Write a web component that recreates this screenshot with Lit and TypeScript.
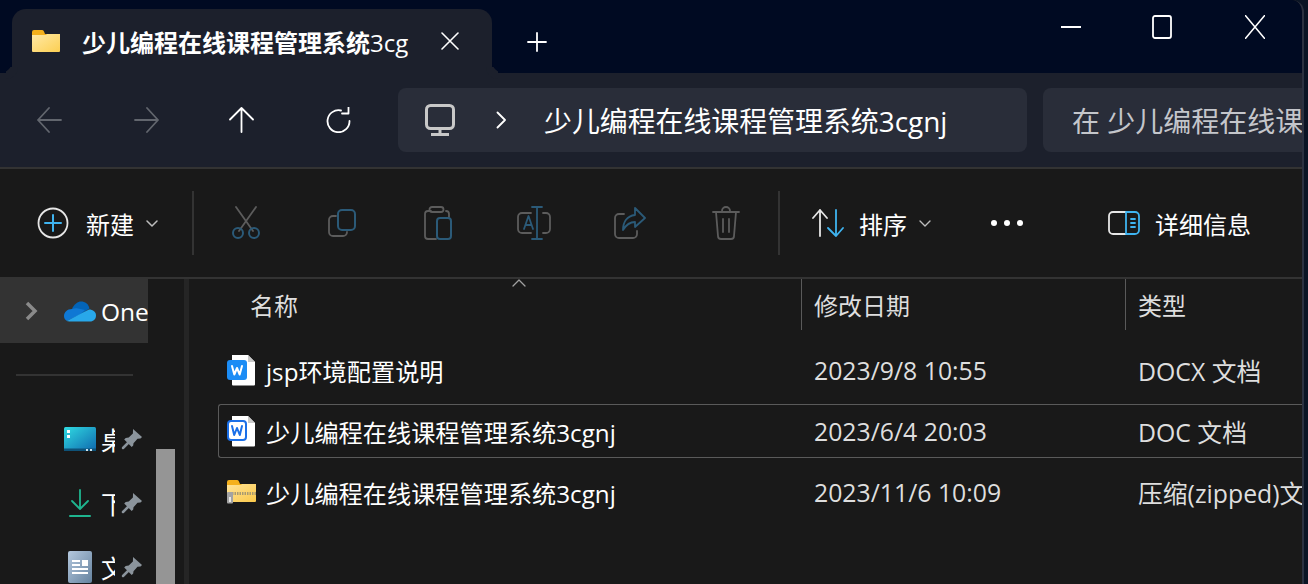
import { LitElement, html, css, svg } from "lit";
import { customElement } from "lit/decorators.js";

const BLUE = "#3fb4f0";
const DIM_BLUE = "#2b5a78";
const DIM = "#5c5c5c";

const icon = (w: number, h: number, body: unknown, cls = "") =>
  html`<svg class=${cls} width=${w} height=${h} viewBox="0 0 ${w} ${h}" fill="none" stroke-linecap="round" stroke-linejoin="round">${body}</svg>`;

const folderIcon = icon(28, 22, svg`
  <defs><linearGradient id="fold" x1="0" y1="0" x2="1" y2="1"><stop offset="0" stop-color="#ffe9a6"/><stop offset="1" stop-color="#fccf52"/></linearGradient></defs>
  <path d="M0 2a2 2 0 0 1 2-2h8a2 2 0 0 1 2 1.500l1 2.500h15v4H0z" fill="#f4b01c"/>
  <path d="M0 5h14l1-1h13v17a1 1 0 0 1-1 1H1a1 1 0 0 1-1-1z" fill="url(#fold)"/>
`);

const wordIcon = (outlined: boolean) => icon(29, 32, svg`
  <path d="M5 1h16l7 7v22.500a1 1 0 0 1-1 1H6a1 1 0 0 1-1-1z" fill="#fff"/>
  <path d="M21 1v7h7" fill="#c9c9c9"/>
  ${outlined
    ? svg`<rect x="1" y="6" width="18" height="19" rx="3" fill="#fff" stroke="#1a6fe8" stroke-width="2"/><path d="M5 11l2.200 9 2.800-7 2.800 7 2.200-9" stroke="#1a6fe8" stroke-width="2"/>`
    : svg`<rect x="0" y="6" width="20" height="20" rx="3" fill="#1b8cf5"/><path d="M5 12l2.300 8.500 2.700-6.500 2.700 6.500 2.300-8.500" stroke="#fff" stroke-width="2"/>`}
`);

const zipIcon = icon(29, 24, svg`
  <defs><linearGradient id="zipf" x1="0" y1="0" x2="1" y2="1"><stop offset="0" stop-color="#ffe398"/><stop offset="1" stop-color="#fbc94a"/></linearGradient></defs>
  <path d="M0 2a2 2 0 0 1 2-2h8a2 2 0 0 1 2 1.500l1 2.500h16v4H0z" fill="#f4b01c"/>
  <path d="M0 5h14l1-1h14v17a1 1 0 0 1-1 1H1a1 1 0 0 1-1-1z" fill="url(#zipf)"/>
  <path d="M5 13.500h24" stroke="#a89a72" stroke-width="3" stroke-dasharray="1.500 1" stroke-linecap="butt"/>
  <rect x="0" y="12" width="6" height="11.500" rx="1" fill="#a3a3a3"/>
  <rect x="2" y="17" width="2" height="5" fill="#e8e8e8"/>
`);

const pinIcon = icon(22, 22, svg`
  <path d="M12 1l9 8-1.500 1.500-3 .3-4 4.500-.3 2.200-1.500 1.500-7.500-7.500 1.500-1.500 3-.4 4.200-4 .1-3z" fill="#8b949c"/>
  <path d="M7 15l-5 5" stroke="#8b949c" stroke-width="2.500"/>
`);

const columns = ["名称", "修改日期", "类型"];
const files = [
  { name: "jsp环境配置说明", date: "2023/9/8 10:55", kind: "DOCX 文档", icon: wordIcon(false), selected: false },
  { name: "少儿编程在线课程管理系统3cgnj", date: "2023/6/4 20:03", kind: "DOC 文档", icon: wordIcon(true), selected: true },
  { name: "少儿编程在线课程管理系统3cgnj", date: "2023/11/6 10:09", kind: "压缩(zipped)文件夹", icon: zipIcon, selected: false },
];

@customElement("app-root")
export class AppRoot extends LitElement {
  static override styles = css`
    :host {
      display: block;
      width: 1308px;
      height: 584px;
      overflow: hidden;
      background: #0a1424;
      color: #fff;
      font-family: "Open Sans", "Noto Sans CJK SC", sans-serif;
    }
    svg { display: block; flex: none; }

    .window {
      width: 1304px;
      height: 584px;
      box-sizing: border-box;
      border-right: 2px solid #2b3140;
      border-top-right-radius: 12px;
      overflow: hidden;
      background: #191919;
    }

    .titlebar {
      height: 73px;
      background: #000a22;
      display: flex;
      align-items: flex-end;
      padding-left: 12px;
    }
    .tab {
      position: relative;
      width: 480px;
      height: 64px;
      flex: none;
      box-sizing: border-box;
      background: #1c202c;
      border-radius: 14px 14px 0 0;
      display: flex;
      align-items: center;
      padding-left: 20px;
      font-size: 24px;
      font-weight: 700;
      white-space: nowrap;
    }
    .tab::before,
    .tab::after {
      content: "";
      position: absolute;
      bottom: 0;
      width: 12px;
      height: 12px;
      background: #000a22;
    }
    .tab::before { left: -12px; border-bottom-right-radius: 12px; box-shadow: 6px 6px 0 0 #1c202c; }
    .tab::after { right: -12px; border-bottom-left-radius: 12px; box-shadow: -6px 6px 0 0 #1c202c; }
    .tab-name { width: 326px; margin-left: 22px; flex: none; }
    .tab-latin { font-weight: 400; }
    .tab-x { margin-left: 33px; }
    .new-tab { margin-left: 35px; align-self: center; margin-top: 10px; }
    .winctl {
      margin-left: auto;
      align-self: flex-start;
      height: 54px;
      display: flex;
      align-items: center;
      padding-right: 37px;
    }
    .min-btn { margin-right: 71px; }
    .max-btn { margin-right: 73px; }

    .navbar {
      height: 94px;
      background: #1c202c;
      display: flex;
      align-items: center;
      box-sizing: border-box;
    }
    .nav-btns { width: 398px; display: flex; padding-left: 37px; gap: 72px; box-sizing: border-box; flex: none; }
    .nav-up { margin-left: -2px; }
    .address {
      width: 629px;
      height: 64px;
      flex: none;
      background: #292d39;
      border-radius: 8px;
      display: flex;
      align-items: center;
      padding-left: 27px;
      box-sizing: border-box;
      font-size: 27.900px;
      white-space: nowrap;
    }
    .crumb-sep { margin: 0 38px 0 41px; }
    .search {
      margin-left: 16px;
      flex: 1;
      min-width: 0;
      height: 64px;
      background: #292d39;
      border-radius: 8px 0 0 8px;
      padding-left: 29px;
      display: flex;
      align-items: center;
      font-size: 28px;
      color: #c4c6cb;
      white-space: nowrap;
      overflow: hidden;
    }

    .toolbar {
      height: 112px;
      box-sizing: border-box;
      border-top: 2px solid #333;
      border-bottom: 2px solid #333;
      display: flex;
      align-items: center;
      background: #191919;
      font-size: 24px;
      white-space: nowrap;
    }
    .tb-new { display: flex; align-items: center; padding-left: 37px; width: 192px; box-sizing: border-box; flex: none; }
    .tb-sep { width: 2px; height: 64px; background: #333; flex: none; }
    .tb-group { display: flex; padding-left: 4px; width: 584px; box-sizing: border-box; flex: none; align-items: center; }
    .tb-cell { width: 96px; flex: none; display: flex; justify-content: center; }
    .tb-sort { display: flex; align-items: center; padding-left: 32px; width: 210px; box-sizing: border-box; flex: none; }
    .tb-more { flex: none; width: 118px; }
    .tb-details { display: flex; align-items: center; gap: 15px; }
    .lbl-new { margin-left: 17px; }
    .lbl-sort { margin-left: 15px; }
    .chev-new { margin-left: 12px; }
    .chev-sort { margin-left: 12px; }

    .main { display: flex; height: 305px; }
    .side { width: 184px; flex: none; display: flex; position: relative; border-right: 5px solid #252525; }
    .side-list { width: 148px; flex: none; overflow: hidden; font-size: 24.500px; }
    .side-head {
      height: 64px;
      background: #333;
      display: flex;
      align-items: center;
      padding-left: 25px;
      box-sizing: border-box;
      white-space: nowrap;
    }
    .side-head .cloud { margin-left: 26px; margin-right: 5px; }
    .side-rule { height: 2px; width: 117px; background: #333; margin: 31px 0 0 16px; }
    .side-items { margin-top: 31px; display: flex; flex-direction: column; }
    .side-item { height: 64px; display: flex; align-items: center; padding-left: 64px; box-sizing: border-box; white-space: nowrap; }
    .side-ic { width: 32px; display: flex; justify-content: center; flex: none; }
    .side-txt { width: 14px; overflow: hidden; margin-left: 5px; flex: none; }
    .side-pin { margin-left: 6px; flex: none; }
    .thumb {
      position: absolute;
      left: 156px;
      top: 170px;
      width: 19px;
      height: 135px;
      background: #959595;
    }

    .content { flex: 1; min-width: 0; position: relative; overflow: hidden; font-size: 24.200px; }
    .sort-caret { position: absolute; left: 323px; top: 0; }
    .thead { height: 51px; display: flex; color: #dedede; font-size: 24px; }
    .th { display: flex; align-items: center; box-sizing: border-box; white-space: nowrap; }
    .th-name { width: 613px; padding-left: 61px; border-right: 1px solid #5a5a5a; }
    .th-date { width: 324px; padding-left: 12px; border-right: 1px solid #5a5a5a; }
    .th-kind { padding-left: 12px; }
    .rows { padding-top: 10px; display: flex; flex-direction: column; gap: 4px; }
    .row {
      display: flex;
      align-items: center;
      height: 60px;
      margin-left: 29px;
      box-sizing: border-box;
      border: 1px solid transparent;
      border-right: 0;
      white-space: nowrap;
    }
    .row.sel { height: 54px; border-color: #5a5a5a; border-radius: 3px 0 0 3px; }
    .row-name { width: 585px; display: flex; align-items: center; flex: none; padding-left: 8px; box-sizing: border-box; gap: 10px; }
    .row-date { width: 324px; flex: none; padding-left: 10px; box-sizing: border-box; color: #dedede; font-size: 24.800px; }
    .row-kind { padding-left: 10px; color: #dedede; font-size: 24.800px; }
  `;

  override render() {
    return html`
      <div class="window">
        <div class="titlebar">
          <div class="tab">
            ${folderIcon}
            <span class="tab-name">少儿编程在线课程管理系统<span class="tab-latin">3cg</span></span>
            ${icon(18, 18, svg`<path d="M1 1l16 16M17 1L1 17" stroke="#fff" stroke-width="1.600"/>`, "tab-x")}
          </div>
          ${icon(20, 20, svg`<path d="M10 1v18M1 10h18" stroke="#fff" stroke-width="1.800"/>`, "new-tab")}
          <div class="winctl">
            ${icon(20, 2, svg`<path d="M0 1h20" stroke="#fff" stroke-width="2" stroke-linecap="butt"/>`, "min-btn")}
            ${icon(20, 24, svg`<rect x="1" y="1" width="18" height="22" rx="2" stroke="#fff" stroke-width="1.800"/>`, "max-btn")}
            ${icon(20, 24, svg`<path d="M0 0l20 24M20 0L0 24" stroke="#fff" stroke-width="1.500"/>`)}
          </div>
        </div>

        <div class="navbar">
          <div class="nav-btns">
            ${icon(25, 26, svg`<path d="M24 13H1M12 1L1 13l11 12" stroke="#62666e" stroke-width="1.800"/>`)}
            ${icon(25, 26, svg`<path d="M1 13h23M13 1l11 12-11 12" stroke="#62666e" stroke-width="1.800"/>`)}
            ${icon(25, 26, svg`<path d="M12.500 25V1M1 12.500L12.500 1 24 12.500" stroke="#fff" stroke-width="1.800"/>`, "nav-up")}
            ${icon(25, 26, svg`<path d="M15 3.500A11 11 0 1 0 23.500 14M22.500 0v6.500H16" stroke="#fff" stroke-width="1.800"/>`)}
          </div>
          <div class="address">
            ${icon(30, 32, svg`<rect x="1.500" y="1.500" width="27" height="23" rx="4" stroke="#c8c8c8" stroke-width="3"/><path d="M15 25v5M6 30.500h18" stroke="#c8c8c8" stroke-width="3" stroke-linecap="butt"/>`)}
            ${icon(10, 18, svg`<path d="M1.500 1.500L9 9l-7.500 7.500" stroke="#fff" stroke-width="1.800"/>`, "crumb-sep")}
            <span>少儿编程在线课程管理系统3cgnj</span>
          </div>
          <div class="search">在 少儿编程在线课程管理系统3cgnj 中搜索</div>
        </div>

        <div class="toolbar">
          <div class="tb-new">
            ${icon(32, 32, svg`<circle cx="16" cy="16" r="14.500" stroke="#e6e6e6" stroke-width="1.800"/><path d="M16 8v16M8 16h16" stroke=${BLUE} stroke-width="2"/>`)}
            <span class="lbl-new">新建</span>
            ${icon(12, 7, svg`<path d="M1 1l5 5 5-5" stroke="#bdbdbd" stroke-width="1.500"/>`, "chev-new")}
          </div>
          <div class="tb-sep"></div>
          <div class="tb-group">
            <span class="tb-cell">${icon(28, 34, svg`<path d="M4 1l17 24M24 1L7 25" stroke=${DIM} stroke-width="1.800"/><circle cx="6" cy="27" r="5" stroke=${DIM_BLUE} stroke-width="2"/><circle cx="22" cy="27" r="5" stroke=${DIM_BLUE} stroke-width="2"/>`)}</span>
            <span class="tb-cell">${icon(28, 28, svg`<path d="M8 7H5a4 4 0 0 0-4 4v12a4 4 0 0 0 4 4h10a4 4 0 0 0 4-4" stroke=${DIM} stroke-width="1.800"/><rect x="10" y="1" width="17" height="20" rx="4" stroke=${DIM_BLUE} stroke-width="2"/>`)}</span>
            <span class="tb-cell">${icon(28, 34, svg`<path d="M7 5H4a3 3 0 0 0-3 3v22a3 3 0 0 0 3 3h8M22 5a3 3 0 0 1 3 3v3M8 1h9a1.500 1.500 0 0 1 0 5H8a1.500 1.500 0 0 1 0-5z" stroke=${DIM} stroke-width="1.800"/><rect x="13" y="12" width="14" height="21" rx="3" stroke=${DIM_BLUE} stroke-width="2"/>`)}</span>
            <span class="tb-cell">${icon(34, 34, svg`<path d="M14 7H5a4 4 0 0 0-4 4v12a4 4 0 0 0 4 4h9M26 7h3a4 4 0 0 1 4 4v12a4 4 0 0 1-4 4h-3" stroke=${DIM} stroke-width="1.800"/><path d="M20 1v32M15 1h10M15 33h10M7 23l4.500-13L16 23M8.500 19h6" stroke=${DIM_BLUE} stroke-width="1.800"/>`)}</span>
            <span class="tb-cell">${icon(32, 32, svg`<path d="M10 7H5a4 4 0 0 0-4 4v16a4 4 0 0 0 4 4h14a4 4 0 0 0 4-4v-3" stroke=${DIM} stroke-width="1.800"/><path d="M21 1l10 10-10 9v-5c-6 0-9 3-12 8 0-8 4-14 12-15z" stroke=${DIM_BLUE} stroke-width="1.800"/>`)}</span>
            <span class="tb-cell">${icon(28, 34, svg`<path d="M1 6h26M10 5a4 4 0 0 1 8 0M4 6l2 24a3 3 0 0 0 3 3h10a3 3 0 0 0 3-3l2-24M11 13v13M17 13v13" stroke=${DIM} stroke-width="1.800"/>`)}</span>
          </div>
          <div class="tb-sep"></div>
          <div class="tb-sort">
            ${icon(32, 28, svg`<path d="M8 27V1M1 9l7-8 7 8" stroke="#e6e6e6" stroke-width="1.800"/><path d="M24 1v26M16 19l8 8 7-8" stroke=${BLUE} stroke-width="1.800"/>`)}
            <span class="lbl-sort">排序</span>
            ${icon(12, 7, svg`<path d="M1 1l5 5 5-5" stroke="#bdbdbd" stroke-width="1.400"/>`, "chev-sort")}
          </div>
          <div class="tb-more">
            ${icon(34, 8, svg`<circle cx="4" cy="4" r="3" fill="#fff"/><circle cx="17" cy="4" r="3" fill="#fff"/><circle cx="30" cy="4" r="3" fill="#fff"/>`)}
          </div>
          <div class="tb-details">
            ${icon(32, 24, svg`<path d="M18 1H5a4 4 0 0 0-4 4v14a4 4 0 0 0 4 4h13" stroke="#e6e6e6" stroke-width="1.800"/><path d="M18 1h9a4 4 0 0 1 4 4v14a4 4 0 0 1-4 4h-9zM23 8h4M23 12h4M23 16h4" stroke=${BLUE} stroke-width="1.800"/>`)}
            <span>详细信息</span>
          </div>
        </div>

        <div class="main">
          <div class="side">
            <div class="side-list">
              <div class="side-head">
                ${icon(13, 20, svg`<path d="M2 2l8 8-8 8" stroke="#8a8a8a" stroke-width="3.500" stroke-linejoin="miter" stroke-linecap="butt"/>`)}
                ${icon(32, 21, svg`
                  <path d="M8 8C10 3 14 .5 17 .5c4 0 7.500 2.500 8.500 7L14 15z" fill="#0364b8"/>
                  <path d="M8 8C3 8 0 11.500 0 15c0 2 1 4 3 5l12-6 6-5-7-1.500c-2-.5-4-.2-6 .5z" fill="#0f78d4"/>
                  <path d="M25 8.500c4 0 7 2.500 7 6 0 3.500-2.500 6-6 6H6c-1.500 0-2.500-.2-3-.5l15-8z" fill="#28a8ea"/>
                `, "cloud")}
                <span>OneDrive</span>
              </div>
              <div class="side-rule"></div>
              <div class="side-items">
                <div class="side-item">
                  <span class="side-ic">${icon(32, 24, svg`
                    <defs><linearGradient id="desk" x1="0" y1="0" x2="1" y2="1"><stop offset="0" stop-color="#30dbe2"/><stop offset="1" stop-color="#0f68ae"/></linearGradient></defs>
                    <rect width="32" height="24" rx="1.500" fill="url(#desk)"/><rect y="21.500" width="32" height="2.500" fill="#0e5278"/>
                    <rect x="3" y="3" width="3" height="3" fill="#fff"/><rect x="3" y="8" width="3" height="3" fill="#fff"/>
                    <rect x="22" y="22" width="2" height="2" fill="#cfe6f2"/><rect x="26" y="22" width="2" height="2" fill="#cfe6f2"/>`)}</span>
                  <span class="side-txt">桌面</span>
                  <span class="side-pin">${pinIcon}</span>
                </div>
                <div class="side-item">
                  <span class="side-ic">${icon(22, 28, svg`<path d="M11 1v18M3 12l8 8 8-8" stroke="#1fb58f" stroke-width="1.800"/><path d="M1 27h20" stroke="#1fb58f" stroke-width="2"/>`)}</span>
                  <span class="side-txt">下载</span>
                  <span class="side-pin">${pinIcon}</span>
                </div>
                <div class="side-item">
                  <span class="side-ic">${icon(24, 32, svg`
                    <defs><linearGradient id="doc" x1="0" y1="0" x2="1" y2="1"><stop offset="0" stop-color="#b4c8de"/><stop offset="1" stop-color="#66839f"/></linearGradient></defs>
                    <rect width="24" height="32" rx="2" fill="url(#doc)"/><rect x="14" y="9" width="6" height="6" fill="#fff"/><path d="M4 10h8M4 14h8M4 18h16M4 22h16" stroke="#fff" stroke-width="1.800" stroke-linecap="butt"/>`)}</span>
                  <span class="side-txt">文档</span>
                  <span class="side-pin">${pinIcon}</span>
                </div>
              </div>
            </div>
            <div class="thumb"></div>
          </div>
          <div class="content">
            ${icon(14, 8, svg`<path d="M1 7l6-6 6 6" stroke="#a0a0a0" stroke-width="1.300"/>`, "sort-caret")}
            <div class="thead">
              ${columns.map((c, i) => html`<div class="th ${["th-name", "th-date", "th-kind"][i]}">${c}</div>`)}
            </div>
            <div class="rows">
              ${files.map(f => html`
                <div class="row ${f.selected ? "sel" : ""}">
                  <div class="row-name">${f.icon}<span>${f.name}</span></div>
                  <div class="row-date">${f.date}</div>
                  <div class="row-kind">${f.kind}</div>
                </div>
              `)}
            </div>
          </div>
        </div>
      </div>
    `;
  }
}
